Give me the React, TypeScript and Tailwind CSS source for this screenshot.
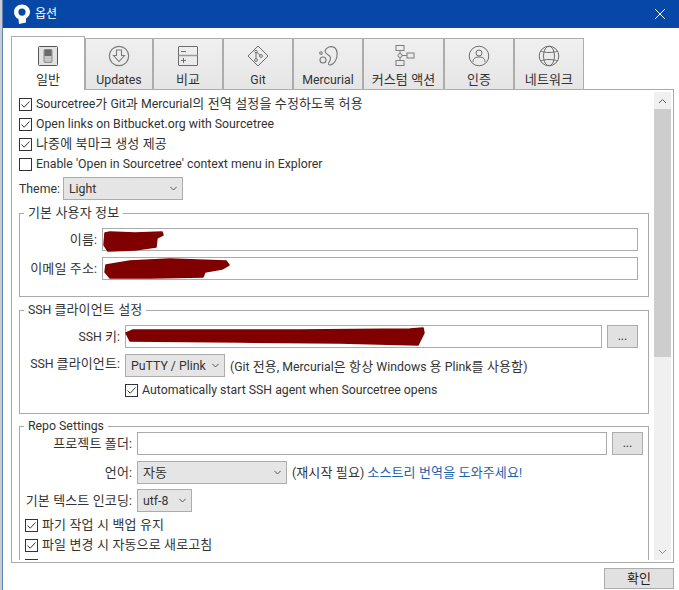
import React from "react";

const FONT = "font-['Roboto','Noto_Sans_CJK_KR',sans-serif]";

function T({ s }: { s: string }) {
  const parts = s.split(/([\uAC00-\uD7A3]+(?:[ ][\uAC00-\uD7A3]+)*)/);
  return (
    <>
      {parts.map((p, i) =>
        i % 2 === 1 ? (
          <span key={i} className="text-[13px] tracking-[0.12px]">
            {p}
          </span>
        ) : (
          <React.Fragment key={i}>{p}</React.Fragment>
        )
      )}
    </>
  );
}

function Check({ checked = true }: { checked?: boolean }) {
  return (
    <span className="w-[13px] h-[13px] shrink-0 border border-[#333333] bg-white flex items-center justify-center">
      {checked && (
        <svg width="11" height="11" viewBox="0 0 11 11" fill="none">
          <path d="M1.5 5.5 L4.2 8.2 L9.5 2.5" stroke="#333333" strokeWidth="1" />
        </svg>
      )}
    </span>
  );
}

function CheckRow({ label, checked = true }: { label?: string; checked?: boolean }) {
  return (
    <div className="h-[20px] flex items-center gap-[4px] whitespace-nowrap">
      <Check checked={checked} />
      {label && (
        <span>
          <T s={label} />
        </span>
      )}
    </div>
  );
}

function Combo({ label, className }: { label: string; className: string }) {
  return (
    <div className={`h-[23px] shrink-0 bg-[#e5e5e5] border border-[#acacac] flex items-center justify-between pl-[5px] pr-[5px] ${className}`}>
      <span>
        <T s={label} />
      </span>
      <svg width="7" height="5" viewBox="0 0 7 5" fill="none">
        <path d="M0.3 0.8 L3.5 4 L6.7 0.8" stroke="#555555" strokeWidth="1" />
      </svg>
    </div>
  );
}

function TextBox({ className, children }: { className: string; children?: React.ReactNode }) {
  return <div className={`relative h-[23px] bg-white border border-[#ababab] ${className}`}>{children}</div>;
}

function Browse() {
  return (
    <div className="w-[31px] h-[23px] shrink-0 bg-[#e1e1e1] border border-[#adadad] flex items-center justify-center text-[#333333] leading-none">
      ...
    </div>
  );
}

function Scribble({ box, d }: { box: string; d: string }) {
  return (
    <svg className="absolute left-0 top-0 w-full h-full overflow-visible" viewBox={box} preserveAspectRatio="none">
      <path d={d} fill="#800000" stroke="#800000" strokeWidth="1.5" strokeLinejoin="round" />
    </svg>
  );
}

function Group({ title, children, className }: { title: string; children: React.ReactNode; className: string }) {
  return (
    <fieldset className={`border border-[#a9a9a9] min-w-0 ${className}`}>
      <legend className="ml-[4px] px-[4px] h-[16px] leading-[16px] text-[#333333]">
        <T s={title} />
      </legend>
      {children}
    </fieldset>
  );
}

const G = "#7d7d7d";

const icons: Record<string, React.ReactNode> = {
  general: (
    <svg width="22" height="22" viewBox="0 0 22 22" fill="none">
      <rect x="1.5" y="1.5" width="19" height="19" rx="1" fill="#e2e2e2" stroke="#555555" />
      <rect x="7" y="4.5" width="8" height="13" rx="1" fill="#c4c4c4" stroke="#8a8a8a" />
      <rect x="7.5" y="5" width="7" height="6" fill="#6a6a6a" />
    </svg>
  ),
  updates: (
    <svg width="22" height="22" viewBox="0 0 22 22" fill="none" stroke={G}>
      <circle cx="11" cy="11" r="9.7" strokeWidth="1.2" />
      <path d="M8.5 5 H13.5 V10.5 H16.5 L11 16.5 L5.5 10.5 H8.5 Z" strokeWidth="1.1" />
    </svg>
  ),
  compare: (
    <svg width="22" height="22" viewBox="0 0 22 22" fill="none" stroke="#6d6d6d">
      <rect x="1.5" y="1.5" width="19" height="19" rx="0.5" />
      <path d="M1.5 10.5 H20.5" stroke="#9a9a9a" strokeWidth="1.5" />
      <path d="M4 6.5 H9 M4 15.5 H9 M6.5 13 V18" />
    </svg>
  ),
  git: (
    <svg width="22" height="22" viewBox="0 0 22 22" fill="none" stroke="#6d6d6d">
      <path d="M11 1 L21 11 L11 21 L1 11 Z" strokeLinejoin="round" />
      <path d="M9 6.5 V15 M9 6.5 L14 11" />
      <circle cx="9" cy="6.5" r="1.2" fill="#fff" />
      <circle cx="9" cy="15" r="1.4" fill="#fff" />
      <circle cx="14" cy="11" r="1.4" fill="#fff" />
    </svg>
  ),
  mercurial: (
    <svg width="22" height="22" viewBox="0 0 22 22" fill="none" stroke="#777777" strokeWidth="1.1">
      <path d="M8 6 C9 2 14 0.5 17.5 2.5 C21 5 21 12 18 16.5 C16 19.5 12.5 21 11.5 19 C11 17.5 14 16 13.5 12.5 C13 9.5 8 10 8 6 Z" />
      <circle cx="4" cy="8" r="1.3" />
      <circle cx="6" cy="15" r="3" />
    </svg>
  ),
  custom: (
    <svg width="22" height="22" viewBox="0 0 22 22" fill="none" stroke="#7d7d7d">
      <rect x="3" y="0.5" width="8" height="5" />
      <rect x="3" y="15.5" width="8" height="5" />
      <rect x="14" y="8" width="7" height="5" />
      <path d="M7 5.5 V15.5 M9 10.5 H14" />
      <circle cx="7" cy="10.5" r="2" fill="#ededed" />
    </svg>
  ),
  auth: (
    <svg width="22" height="22" viewBox="0 0 22 22" fill="none" stroke="#6d6d6d">
      <circle cx="11" cy="11" r="9.8" />
      <circle cx="11" cy="8" r="3" />
      <path d="M5 17 C5 13 8 12 11 12 C14 12 17 13 17 17" />
    </svg>
  ),
  network: (
    <svg width="22" height="22" viewBox="0 0 22 22" fill="none" stroke="#6d6d6d">
      <circle cx="11" cy="11" r="9.8" />
      <ellipse cx="11" cy="11" rx="5.5" ry="9.8" />
      <path d="M2.8 6 C7 8 15 8 19.2 6 M2.8 16 C7 14 15 14 19.2 16" />
    </svg>
  ),
};

function Tab({ icon, label, w, active = false }: { icon: string; label: string; w: string; active?: boolean }) {
  return (
    <div
      className={`${w} shrink-0 border border-[#acacac] flex flex-col items-center ${
        active
          ? "h-[54px] bg-white border-b-0 pt-[8px] relative z-10"
          : "h-[52px] mt-[2px] bg-gradient-to-b from-[#f0f0f0] to-[#e5e5e5] pt-[6px]"
      }`}
    >
      <div className="h-[22px] flex items-center justify-center">{icons[icon]}</div>
      <div className="mt-[4px] leading-[18px] text-[#333333] whitespace-nowrap">
        <T s={label} />
      </div>
    </div>
  );
}

export default function App() {
  return (
    <div className={`${FONT} w-[679px] h-[590px] flex bg-white overflow-hidden text-[12.3px] leading-[16px] text-[#333333]`}>
      <div className="w-[2px] shrink-0 bg-[#c9cdd2]" />
      <div className="flex-1 min-w-0 flex flex-col border-l border-[#5f84b5]">
        <div className="h-[28px] shrink-0 bg-[#0747a6] flex items-center pl-[10px] pr-[13px]">
          <svg width="18" height="20" viewBox="0 0 18 20">
            <path
              fillRule="evenodd"
              d="M9 0.5 C13.5 0.5 17 3.8 17 8 C17 11 15.3 13.2 13 14.4 L13 18.5 L6 20 L5.5 15 C2.8 14 1 11.3 1 8 C1 3.8 4.5 0.5 9 0.5 Z M9 4.5 A3.6 3.6 0 1 0 9 11.7 A3.6 3.6 0 1 0 9 4.5 Z"
              fill="#ffffff"
            />
          </svg>
          <span className="ml-[4px] text-white text-[12px]">옵션</span>
          <svg className="ml-auto" width="12" height="12" viewBox="0 0 12 12" fill="none">
            <path d="M1 1 L11 11 M11 1 L1 11" stroke="#ffffff" strokeWidth="1" />
          </svg>
        </div>

        <div className="flex pl-[8px] pt-[8px] -mb-px relative">
          <Tab icon="general" label="일반" w="w-[74px]" active />
          <Tab icon="updates" label="Updates" w="w-[68px]" />
          <Tab icon="compare" label="비교" w="w-[70px]" />
          <Tab icon="git" label="Git" w="w-[70px]" />
          <Tab icon="mercurial" label="Mercurial" w="w-[70px]" />
          <Tab icon="custom" label="커스텀 액션" w="w-[81px]" />
          <Tab icon="auth" label="인증" w="w-[70px]" />
          <Tab icon="network" label="네트워크" w="w-[70px]" />
        </div>

        <div className="ml-[8px] mr-[5px] h-[474px] shrink-0 border border-[#a9a9a9] flex pt-[2px] pb-[2px]">
          <div className="w-[642px] shrink-0 pl-[7px] pr-[5px] pt-[2px] overflow-hidden">
            <CheckRow label="Sourcetree가 Git과 Mercurial의 전역 설정을 수정하도록 허용" />
            <CheckRow label="Open links on Bitbucket.org with Sourcetree" />
            <CheckRow label="나중에 북마크 생성 제공" />
            <CheckRow label="Enable 'Open in Sourcetree' context menu in Explorer" checked={false} />

            <div className="flex items-center gap-[3px] mt-[3px]">
              <span>Theme:</span>
              <Combo label="Light" className="w-[120px]" />
            </div>

            <Group title="기본 사용자 정보" className="mt-[5px] pt-[7px] pb-[16px] pr-[10px]">
              <div className="flex items-center gap-[5px]">
                <span className="w-[77px] text-right">
                  <T s="이름:" />
                </span>
                <TextBox className="flex-1">
                  <Scribble
                    box="103 229 534 21"
                    d="M105 233 L110 232 L135 233 L162 232 L163 235 L157 238 L156 247 L135 250 L108 251 L104 245 Z"
                  />
                </TextBox>
              </div>
              <div className="flex items-center gap-[5px] mt-[6px]">
                <span className="w-[77px] text-right">
                  <T s="이메일 주소:" />
                </span>
                <TextBox className="flex-1">
                  <Scribble
                    box="103 258 534 21"
                    d="M106 265 L130 261 L170 259 L226 261 L229 265 L222 269 L205 272 L203 277 L150 278 L110 278 L105 272 Z"
                  />
                </TextBox>
              </div>
            </Group>

            <Group title="SSH 클라이언트 설정" className="mt-[5px] pt-[7px] pb-[13px] pr-[10px]">
              <div className="flex items-center gap-[5px]">
                <span className="w-[100px] text-right">
                  <T s="SSH 키:" />
                </span>
                <TextBox className="flex-1">
                  <Scribble
                    box="126 326 475 21"
                    d="M126 333 L133 330 L300 330 L410 329 L423 328 L424 333 L418 345 L340 343 L240 342 L130 341 Z"
                  />
                </TextBox>
                <Browse />
              </div>
              <div className="flex items-center gap-[5px] mt-[6px]">
                <span className="w-[100px] text-right -mt-[4px] whitespace-nowrap">
                  <T s="SSH 클라이언트:" />
                </span>
                <Combo label="PuTTY / Plink" className="w-[100px]" />
                <span className="whitespace-nowrap mt-[3px]">
                  <T s="(Git 전용, Mercurial은 항상 Windows 용 Plink를 사용함)" />
                </span>
              </div>
              <div className="ml-[105px] mt-[3px]">
                <CheckRow label="Automatically start SSH agent when Sourcetree opens" />
              </div>
            </Group>

            <Group title="Repo Settings" className="mt-[4px] pr-[5px] h-[200px]">
              <div className="flex items-center gap-[5px] -mt-[2px]">
                <span className="w-[112px] text-right">
                  <T s="프로젝트 폴더:" />
                </span>
                <TextBox className="flex-1" />
                <Browse />
              </div>
              <div className="flex items-center gap-[5px] mt-[6px]">
                <span className="w-[112px] text-right">
                  <T s="언어:" />
                </span>
                <Combo label="자동" className="w-[150px]" />
                <span className="whitespace-nowrap">
                  <T s="(재시작 필요) " />
                  <span className="text-[#1b62ad]">
                    <T s="소스트리 번역을 도와주세요!" />
                  </span>
                </span>
              </div>
              <div className="flex items-center gap-[5px] mt-[5px]">
                <span className="w-[112px] text-right whitespace-nowrap">
                  <T s="기본 텍스트 인코딩:" />
                </span>
                <Combo label="utf-8" className="w-[55px]" />
              </div>
              <div className="pl-[5px] mt-[3px]">
                <CheckRow label="파기 작업 시 백업 유지" />
                <CheckRow label="파일 변경 시 자동으로 새로고침" />
                <CheckRow checked={false} />
              </div>
            </Group>
          </div>

          <div className="w-[17px] shrink-0 bg-[#f0f0f0] flex flex-col">
            <div className="h-[17px] flex items-center justify-center">
              <svg width="9" height="6" viewBox="0 0 9 6" fill="none">
                <path d="M1 5 L4.5 1.5 L8 5" stroke="#606060" />
              </svg>
            </div>
            <div className="h-[248px] bg-[#cdcdcd]" />
            <div className="flex-1" />
            <div className="h-[17px] flex items-center justify-center">
              <svg width="9" height="6" viewBox="0 0 9 6" fill="none">
                <path d="M1 1 L4.5 4.5 L8 1" stroke="#9a9a9a" />
              </svg>
            </div>
          </div>
        </div>

        <div className="flex justify-end pr-[5px] pt-[5px]">
          <div className="w-[70px] h-[21px] bg-[#e1e1e1] border border-[#adadad] flex items-center justify-center text-[#222222]">
            <T s="확인" />
          </div>
        </div>
      </div>
    </div>
  );
}
